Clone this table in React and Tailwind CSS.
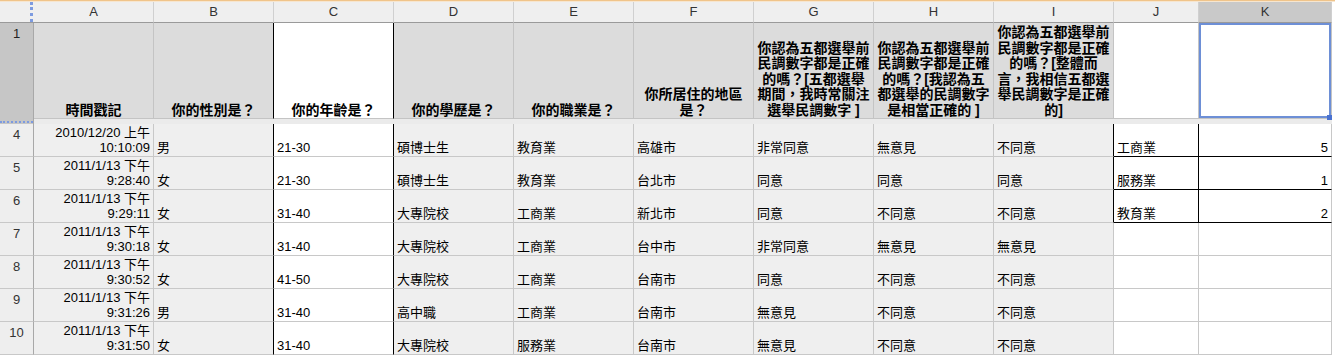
const letters = ['A', 'B', 'C', 'D', 'E', 'F', 'G', 'H', 'I', 'J', 'K'];

const headers = [
  ['時間戳記'],
  ['你的性別是？'],
  ['你的年齡是？'],
  ['你的學歷是？'],
  ['你的職業是？'],
  ['你所居住的地區', '是？'],
  ['你認為五都選舉前', '民調數字都是正確', '的嗎？[五都選舉', '期間，我時常關注', '選舉民調數字 ]'],
  ['你認為五都選舉前', '民調數字都是正確', '的嗎？[我認為五', '都選舉的民調數字', '是相當正確的 ]'],
  ['你認為五都選舉前', '民調數字都是正確', '的嗎？[整體而', '言，我相信五都選', '舉民調數字是正確', '的]'],
  [],
  [],
];

const rows = [
  { n: 4, d: ['2010/12/20 上午', '10:10:09'], v: ['男', '21-30', '碩博士生', '教育業', '高雄市', '非常同意', '無意見', '不同意', '工商業', '5'] },
  { n: 5, d: ['2011/1/13 下午', '9:28:40'], v: ['女', '21-30', '碩博士生', '教育業', '台北市', '同意', '同意', '同意', '服務業', '1'] },
  { n: 6, d: ['2011/1/13 下午', '9:29:11'], v: ['女', '31-40', '大專院校', '工商業', '新北市', '同意', '不同意', '不同意', '教育業', '2'] },
  { n: 7, d: ['2011/1/13 下午', '9:30:18'], v: ['女', '31-40', '大專院校', '工商業', '台中市', '非常同意', '無意見', '無意見', '', ''] },
  { n: 8, d: ['2011/1/13 下午', '9:30:52'], v: ['女', '41-50', '大專院校', '工商業', '台南市', '同意', '不同意', '不同意', '', ''] },
  { n: 9, d: ['2011/1/13 下午', '9:31:26'], v: ['男', '31-40', '高中職', '工商業', '台南市', '無意見', '不同意', '不同意', '', ''] },
  { n: 10, d: ['2011/1/13 下午', '9:31:50'], v: ['女', '31-40', '大專院校', '服務業', '台南市', '無意見', '不同意', '不同意', '', ''] },
];

const grid = 'grid grid-cols-[34px_repeat(9,120px)_85px_133px]';

function HeadCell({ i, lines }) {
  const white = i === 2 || i >= 9;
  const right = i === 1 || i === 2 ? 'border-r-black' : 'border-r-[#c4c4c4]';
  return (
    <div
      className={`relative flex flex-col justify-end items-center text-center border-r border-b border-b-[#c4c4c4] ${right} ${white ? 'bg-white' : 'bg-[#dcdcdc]'} text-[14px] leading-[15.5px] font-bold text-black`}
    >
      {lines.map((l, k) => (
        <div key={k} className="whitespace-nowrap">{l}</div>
      ))}
      {i === 10 && (
        <div className="absolute inset-0 border-2 border-[#6d8fd6]">
          <div className="absolute -right-[3px] -bottom-[4px] w-[5px] h-[5px] bg-[#4a72d0]" />
        </div>
      )}
    </div>
  );
}

function DataCell({ i, row, children }) {
  const white = i === 2 || i >= 9;
  const box = row.n <= 6 && i >= 9;
  let right = 'border-r-[#c8c8c8]';
  if (i === 1 || i === 2) right = 'border-r-black';
  if (row.n <= 6 && (i === 8 || i === 9)) right = 'border-r-black';
  const bottom = box ? 'border-b-black' : 'border-b-[#c8c8c8]';
  const align = i === 0 || i === 10 ? 'items-end text-right pr-[3px]' : 'items-start pl-[3px]';
  return (
    <div
      className={`flex flex-col justify-end ${align} border-r border-b ${right} ${bottom} ${white ? 'bg-white' : 'bg-[#efefef]'} text-[13px] leading-[15px] text-black pb-[1px] overflow-hidden`}
    >
      {children}
    </div>
  );
}

export default function App() {
  return (
    <div className="w-[1335px] h-[358px] overflow-hidden bg-white font-['Liberation_Sans','Noto_Sans_CJK_TC',sans-serif]">
      <div className="h-[1px] bg-[#f0c48a]" />
      <div className="h-[1px] bg-[#f7e6cf]" />

      <div className={`${grid} h-[21px]`}>
        <div className="flex justify-end bg-[#efefef] border-b border-b-[#9a9a9a]">
          <div className="w-[3px] mr-[1px] border-r-[3px] border-dotted border-[#7d9be0]" />
        </div>
        {letters.map((c, i) => (
          <div
            key={c}
            className={`flex items-center justify-center border-r border-r-[#d0d0d0] border-b border-b-[#9a9a9a] text-[13px] text-[#333] ${i === 10 ? 'bg-[#c9c9c9]' : 'bg-[#efefef]'}`}
          >
            {c}
          </div>
        ))}
      </div>

      <div className={`${grid} h-[96px]`}>
        <div className="flex justify-center pt-[1px] bg-[#c6c6c6] border-r border-r-[#a8a8a8] text-[13px] text-[#222]">1</div>
        {headers.map((lines, i) => (
          <HeadCell key={i} i={i} lines={lines} />
        ))}
      </div>

      <div className={`${grid} h-[5px]`}>
        <div className="bg-[#c6c6c6] border-r border-r-[#a8a8a8]">
          <div className="mt-[2px] border-b-2 border-dotted border-[#7d9be0]" />
        </div>
        <div className="col-span-11 bg-[#ebebeb]" />
      </div>

      {rows.map((r) => (
        <div key={r.n} className={`${grid} h-[33px]`}>
          <div className="flex justify-center pt-[1px] bg-[#eeeeee] border-r border-r-[#a8a8a8] border-b border-b-[#c8c8c8] text-[13px] text-[#333]">
            {r.n}
          </div>
          <DataCell i={0} row={r}>
            <div className="whitespace-nowrap">{r.d[0]}</div>
            <div className="whitespace-nowrap">{r.d[1]}</div>
          </DataCell>
          {r.v.map((v, k) => (
            <DataCell key={k} i={k + 1} row={r}>
              <div className="whitespace-nowrap">{v}</div>
            </DataCell>
          ))}
        </div>
      ))}
    </div>
  );
}
